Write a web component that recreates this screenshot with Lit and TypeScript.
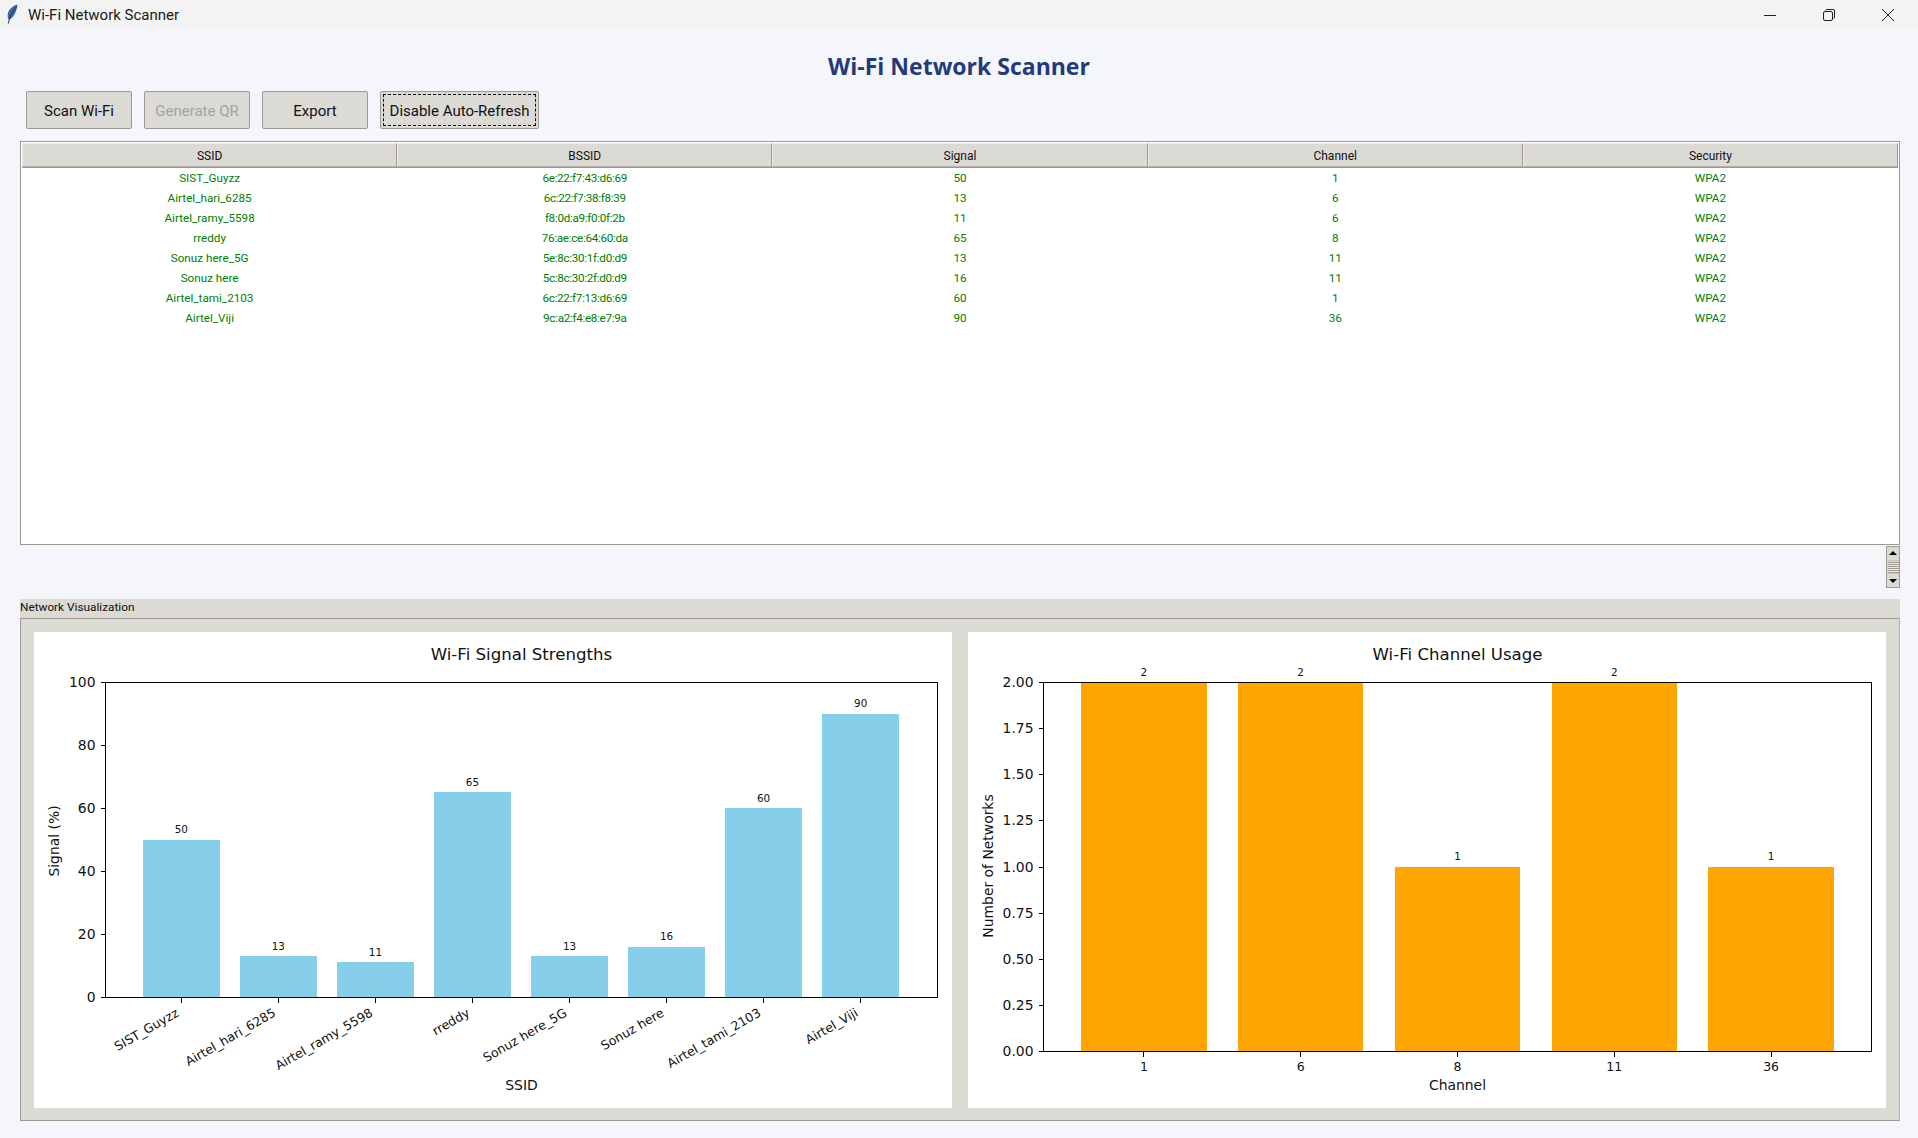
import { LitElement, html, css, svg } from 'lit';
import { customElement } from 'lit/decorators.js';

const networks = [
  ['SIST_Guyzz', '6e:22:f7:43:d6:69', 50, 1, 'WPA2'],
  ['Airtel_hari_6285', '6c:22:f7:38:f8:39', 13, 6, 'WPA2'],
  ['Airtel_ramy_5598', 'f8:0d:a9:f0:0f:2b', 11, 6, 'WPA2'],
  ['rreddy', '76:ae:ce:64:60:da', 65, 8, 'WPA2'],
  ['Sonuz here_5G', '5e:8c:30:1f:d0:d9', 13, 11, 'WPA2'],
  ['Sonuz here', '5c:8c:30:2f:d0:d9', 16, 11, 'WPA2'],
  ['Airtel_tami_2103', '6c:22:f7:13:d6:69', 60, 1, 'WPA2'],
  ['Airtel_Viji', '9c:a2:f4:e8:e7:9a', 90, 36, 'WPA2'],
];
const columns = ['SSID', 'BSSID', 'Signal', 'Channel', 'Security'];
const channels: [string, number][] = [['1', 2], ['6', 2], ['8', 1], ['11', 2], ['36', 1]];

// plot coordinates are relative to the white 918x476 panel
const PW = 918;
const PH = 476;

function axes(l: number, t: number, r: number, b: number) {
  return svg`<rect class="crisp" x=${l} y=${t} width=${r - l} height=${b - t} fill="none" stroke="#000" stroke-width="1"></rect>`;
}

function signalChart() {
  const l = 71.5, r = 903.5, t = 50.5, b = 365.5;
  const cx = (i: number) => 147.3 + i * 97.05;
  const barW = 77.6;
  const y = (v: number) => b - (v / 100) * (b - t);
  return html`<svg class="plot" viewBox="0 0 ${PW} ${PH}" width=${PW} height=${PH}>
    <text class="title" x=${(l + r) / 2} y="28" text-anchor="middle">Wi-Fi Signal Strengths</text>
    ${networks.map((n, i) => {
      const v = n[2] as number;
      return svg`
        <rect class="crisp" x=${cx(i) - barW / 2} y=${y(v) - 0.5} width=${barW} height=${b - y(v) + 0.5} fill="#87ceeb"></rect>
        <text class="val" x=${cx(i)} y=${y(v) - 7} text-anchor="middle">${v}</text>
        <line class="crisp" x1=${cx(i)} x2=${cx(i)} y1=${b} y2=${b + 5} stroke="#000"></line>
        <text class="tick-sm" text-anchor="end" transform="translate(${cx(i) - 2.5} ${b + 16.5}) rotate(-30)" dominant-baseline="hanging" dy="-8">${n[0]}</text>`;
    })}
    ${[0, 20, 40, 60, 80, 100].map(
      (v) => svg`
        <line class="crisp" x1=${l - 5} x2=${l} y1=${y(v)} y2=${y(v)} stroke="#000"></line>
        <text class="tick" x=${l - 10} y=${y(v) + 4.5} text-anchor="end">${v}</text>`
    )}
    ${axes(l, t, r, b)}
    <text class="label" x=${(l + r) / 2} y="458" text-anchor="middle">SSID</text>
    <text class="label" transform="translate(25 ${(t + b) / 2 + 1}) rotate(-90)" text-anchor="middle">Signal (%)</text>
  </svg>`;
}

function channelChart() {
  const l = 75.5, r = 903.5, t = 50.5, b = 419.5;
  const unit = (r - l) / 5.28;
  const cx = (i: number) => l + (0.64 + i) * unit;
  const y = (v: number) => b - (v / 2) * (b - t);
  return html`<svg class="plot" viewBox="0 0 ${PW} ${PH}" width=${PW} height=${PH}>
    <text class="title" x=${(l + r) / 2} y="28" text-anchor="middle">Wi-Fi Channel Usage</text>
    ${channels.map(
      ([c, v], i) => svg`
        <rect class="crisp" x=${cx(i) - unit * 0.4} y=${y(v)} width=${unit * 0.8} height=${b - y(v)} fill="#ffa500"></rect>
        <text class="val" x=${cx(i)} y=${y(v) - 7} text-anchor="middle">${v}</text>
        <line class="crisp" x1=${cx(i)} x2=${cx(i)} y1=${b} y2=${b + 5} stroke="#000"></line>
        <text class="tick-sm" x=${cx(i)} y=${b + 19} text-anchor="middle">${c}</text>`
    )}
    ${[0, 0.25, 0.5, 0.75, 1, 1.25, 1.5, 1.75, 2].map(
      (v) => svg`
        <line class="crisp" x1=${l - 5} x2=${l} y1=${y(v)} y2=${y(v)} stroke="#000"></line>
        <text class="tick" x=${l - 10} y=${y(v) + 4.5} text-anchor="end">${v.toFixed(2)}</text>`
    )}
    ${axes(l, t, r, b)}
    <text class="label" x=${(l + r) / 2} y="458" text-anchor="middle">Channel</text>
    <text class="label" transform="translate(25 ${(t + b) / 2 - 1}) rotate(-90)" text-anchor="middle">Number of Networks</text>
  </svg>`;
}

@customElement('app-root')
export class AppRoot extends LitElement {
  static styles = css`
    :host {
      display: flex;
      flex-direction: column;
      width: 1918px;
      height: 1138px;
      overflow: hidden;
      background: #f4f6fb;
      font-family: 'Open Sans', 'Noto Sans', sans-serif;
      color: #000;
    }
    .titlebar {
      height: 29px;
      flex: none;
      display: flex;
      align-items: center;
      background: #f3f3f3;
      font-family: Roboto, sans-serif;
      font-size: 15px;
      color: #1a1a1a;
    }
    .feather {
      margin: -1px 10px 0 7px;
      width: 11px;
      height: 20px;
    }
    .caption {
      flex: 1;
    }
    .win {
      width: 59px;
      display: flex;
      justify-content: center;
    }
    .win svg {
      margin-right: 1px;
    }
    .heading {
      height: 62px;
      flex: none;
      display: flex;
      align-items: center;
      justify-content: center;
      padding-top: 11px;
      box-sizing: border-box;
      font-family: 'Open Sans', sans-serif;
      font-weight: 700;
      font-size: 23px;
      color: #233a7a;
    }
    .toolbar {
      flex: none;
      display: flex;
      gap: 12px;
      padding-left: 26px;
      height: 38px;
    }
    .btn {
      box-sizing: border-box;
      width: 106px;
      height: 38px;
      padding-top: 1px;
      display: flex;
      align-items: center;
      justify-content: center;
      background: #dcdad5;
      border: 1px solid #9e9a91;
      border-radius: 2px;
      font-family: Roboto, sans-serif;
      font-size: 15px;
      color: #111;
    }
    .btn.off {
      color: #a3a3a3;
    }
    .btn.wide {
      width: 159px;
      padding-top: 0;
    }
    .btn.wide span {
      border: 1px dashed #000;
      align-self: stretch;
      flex: 1;
      margin: 2px;
      padding-top: 1px;
      display: flex;
      align-items: center;
      justify-content: center;
    }
    .table {
      flex: none;
      box-sizing: border-box;
      margin: 12px 18px 0 20px;
      height: 404px;
      background: #fff;
      border: 1px solid #9e9a91;
      padding: 1px;
      font-family: Roboto, sans-serif;
    }
    .row {
      display: grid;
      grid-template-columns: repeat(5, 1fr);
    }
    .head {
      height: 24px;
      margin-bottom: 1px;
      background: #dcdad5;
      box-shadow: 0 1px 0 #9e9a91;
      font-size: 12px;
      color: #111;
    }
    .head div {
      box-sizing: border-box;
      padding-top: 2px;
      display: flex;
      align-items: center;
      justify-content: center;
      border: 1px solid #9e9a91;
      border-top-color: #eeebe7;
      border-left-color: #eeebe7;
      border-bottom-color: #b4b1a9;
    }
    .cell-row {
      height: 20px;
      font-size: 11.7px;
      color: #008000;
    }
    .cell-row div {
      display: flex;
      align-items: center;
      justify-content: center;
    }
    .cell-row div.hex {
      letter-spacing: -0.32px;
    }
    .scroll-wrap {
      flex: none;
      height: 54px;
      display: flex;
      justify-content: flex-end;
      padding: 1px 18px 0 0;
      box-sizing: border-box;
    }
    .scrollbar {
      box-sizing: border-box;
      width: 14px;
      height: 42px;
      border: 1px solid #9e9a91;
      background: #c8c5bd;
      display: flex;
      flex-direction: column;
      gap: 1px;
    }
    .sb-btn {
      flex: 1;
      background: #dcdad5;
      display: flex;
      align-items: center;
      justify-content: center;
    }
    .tri-up {
      width: 0;
      height: 0;
      border: 4px solid transparent;
      border-top: 0;
      border-bottom: 4px solid #000;
    }
    .tri-down {
      width: 0;
      height: 0;
      border: 4px solid transparent;
      border-bottom: 0;
      border-top: 4px solid #000;
    }
    .grip {
      width: 11px;
      height: 11px;
      background: repeating-linear-gradient(#9e9a91 0 1px, #eeebe7 1px 2px);
    }
    .frame-label {
      flex: none;
      height: 19px;
      margin: 0 18px 0 20px;
      background: #dcdad5;
      font-family: Roboto, sans-serif;
      font-size: 11.8px;
      line-height: 17px;
      color: #111;
    }
    .frame {
      flex: none;
      box-sizing: border-box;
      margin: 0 18px 0 20px;
      height: 503px;
      background: #dcdad5;
      border: 1px solid #9e9a91;
      border-right-color: #b4b1a9;
      padding: 13px;
      display: flex;
      gap: 16px;
    }
    .panel {
      width: 918px;
      height: 476px;
      background: #fff;
    }
    .plot {
      display: block;
      font-family: 'DejaVu Sans', sans-serif;
      fill: #111;
    }
    .crisp {
      shape-rendering: crispEdges;
    }
    .title {
      font-size: 16.6px;
    }
    .label {
      font-size: 13.9px;
    }
    .tick {
      font-size: 13.9px;
    }
    .tick-sm {
      font-size: 12.5px;
    }
    .val {
      font-size: 10.4px;
    }
  `;

  render() {
    return html`
      <div class="titlebar">
        <svg class="feather" viewBox="0 0 11 20">
          <path d="M10.5 .5C6 1.5 1.5 5.5 .8 10c-.4 2.3 -.1 4.2 1 5.6C6 14.5 9.6 8.5 10.5 .5z" fill="#3a68a4"></path>
          <path d="M9.5 2.5C6 7 3 12 1.2 19.5" stroke="#26384f" stroke-width="1" fill="none"></path>
        </svg>
        <div class="caption">Wi-Fi Network Scanner</div>
        <div class="win">
          <svg width="14" height="14" viewBox="0 0 14 14"><path d="M1 7.5h12" stroke="#222" fill="none"></path></svg>
        </div>
        <div class="win">
          <svg width="14" height="14" viewBox="0 0 14 14" fill="none" stroke="#222">
            <rect x="1.5" y="3.5" width="9" height="9" rx="1.5"></rect>
            <path d="M3.5 2.5 a1.5 1.5 0 0 1 1.5-1h6a1.5 1.5 0 0 1 1.5 1.5v6a1.5 1.5 0 0 1-1 1.5"></path>
          </svg>
        </div>
        <div class="win">
          <svg width="14" height="14" viewBox="0 0 14 14"><path d="M1 1l12 12M13 1L1 13" stroke="#222" fill="none"></path></svg>
        </div>
      </div>
      <div class="heading">Wi-Fi Network Scanner</div>
      <div class="toolbar">
        <div class="btn">Scan Wi-Fi</div>
        <div class="btn off">Generate QR</div>
        <div class="btn">Export</div>
        <div class="btn wide"><span>Disable Auto-Refresh</span></div>
      </div>
      <div class="table">
        <div class="row head">${columns.map((c) => html`<div>${c}</div>`)}</div>
        ${networks.map(
          (n) => html`<div class="row cell-row">${n.map((v, i) => html`<div class=${i === 1 ? 'hex' : ''}>${v}</div>`)}</div>`
        )}
      </div>
      <div class="scroll-wrap">
        <div class="scrollbar">
          <div class="sb-btn"><i class="tri-up"></i></div>
          <div class="sb-btn"><i class="grip"></i></div>
          <div class="sb-btn"><i class="tri-down"></i></div>
        </div>
      </div>
      <div class="frame-label">Network Visualization</div>
      <div class="frame">
        <div class="panel">${signalChart()}</div>
        <div class="panel">${channelChart()}</div>
      </div>
    `;
  }
}
